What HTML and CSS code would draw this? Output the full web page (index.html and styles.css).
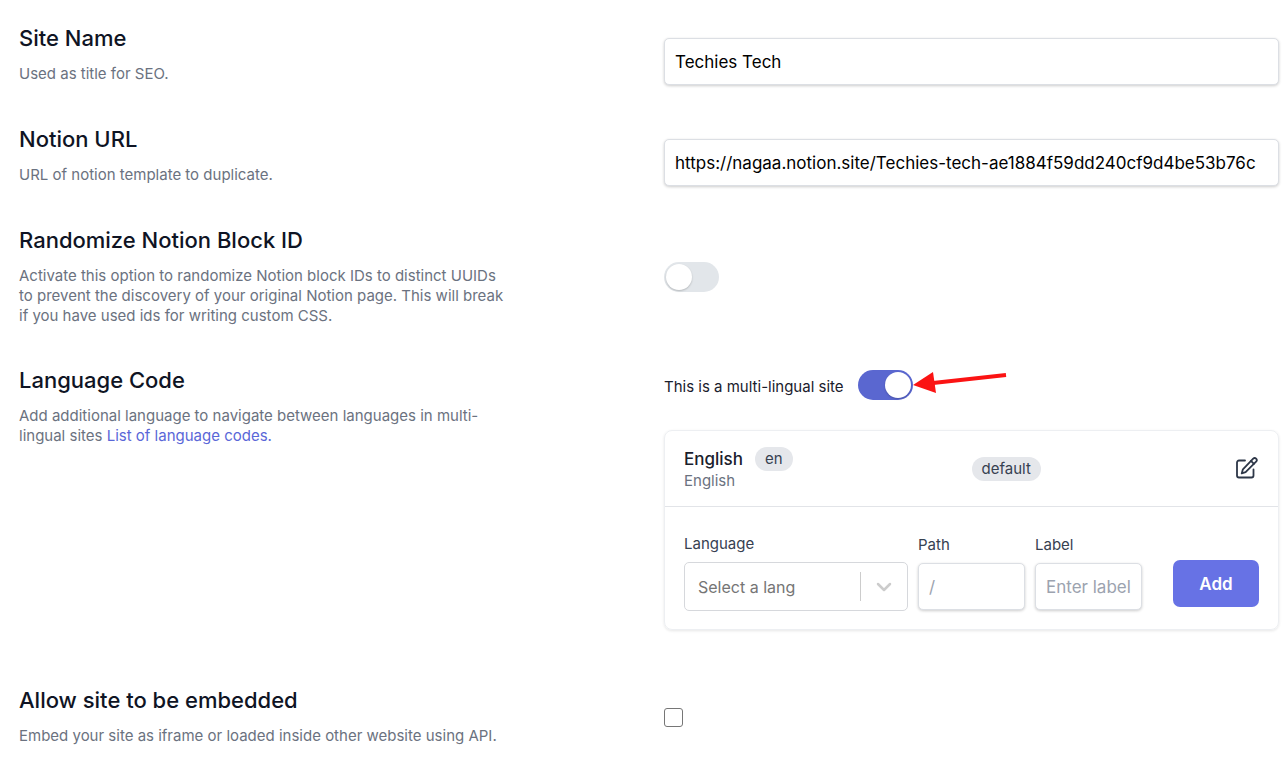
FILE: index.html
```html
<!DOCTYPE html>
<html lang="en">
<head>
    <meta charset="UTF-8">
    <meta name="viewport" content="width=device-width, initial-scale=1.0">
    <title>Site Settings</title>
    <link rel="stylesheet" href="styles.css">
</head>
<body>

    <form class="settings">
        <section class="row">
            <div class="info">
                <h2 class="title"><label for="site-name">Site Name</label></h2>
                <p class="description">Used as title for SEO.</p>
            </div>
            <div class="control control-input">
                <input type="text" id="site-name" class="text-input" value="Techies Tech">
            </div>
        </section>

        <section class="row">
            <div class="info">
                <h2 class="title"><label for="notion-url">Notion URL</label></h2>
                <p class="description">URL of notion template to duplicate.</p>
            </div>
            <div class="control control-input">
                <input type="text" id="notion-url" class="text-input" value="https://nagaa.notion.site/Techies-tech-ae1884f59dd240cf9d4be53b76c">
            </div>
        </section>

        <section class="row">
            <div class="info">
                <h2 class="title"><label for="randomize">Randomize Notion Block ID</label></h2>
                <p class="description">Activate this option to randomize Notion block IDs to distinct UUIDs to prevent the discovery of your original Notion page. This will break if you have used ids for writing custom CSS.</p>
            </div>
            <div class="control control-center">
                <input type="checkbox" id="randomize" class="toggle">
            </div>
        </section>

        <section class="row">
            <div class="info">
                <h2 class="title">Language Code</h2>
                <p class="description">Add additional language to navigate between languages in multi-lingual sites <a href="#" class="link">List of language codes.</a></p>
            </div>
            <div class="control">
                <div class="multi">
                    <label for="multi-lingual" class="multi-label">This is a multi-lingual site</label>
                    <div class="toggle-wrap">
                        <input type="checkbox" id="multi-lingual" class="toggle" checked>
                        <svg class="arrow" width="94" height="26" viewBox="0 0 94 26" aria-hidden="true">
                            <path d="M20 13L93 5" stroke="#fb1313" stroke-width="4" fill="none"/>
                            <path d="M0 15L20 2L23 23Z" fill="#fb1313"/>
                        </svg>
                    </div>
                </div>

                <div class="card">
                    <div class="language">
                        <div>
                            <div class="language-name">English <span class="badge">en</span></div>
                            <div class="language-label">English</div>
                        </div>
                        <div class="language-actions">
                            <span class="badge">default</span>
                            <button type="button" class="edit-btn" aria-label="Edit">
                                <svg width="24" height="24" viewBox="0 0 24 24" fill="none" stroke="currentColor" stroke-width="1.8" stroke-linecap="round" stroke-linejoin="round">
                                    <path d="M10 3.500H4a2 2 0 0 0-2 2v13a2 2 0 0 0 2 2h12.500a2 2 0 0 0 2-2V12.500"/>
                                    <path d="M18.200 1.700a2 2 0 0 1 2.900 2.900L10.600 15.100l-3.900 1.300 1.200-4.100z"/>
                                    <path d="M16 3.900l2.900 2.900"/>
                                </svg>
                            </button>
                        </div>
                    </div>

                    <div class="add-language">
                        <div class="field field-wide">
                            <label for="language">Language</label>
                            <div class="select-wrap">
                                <select id="language" class="select">
                                    <option>Select a lang</option>
                                </select>
                                <svg class="chevron" width="20" height="20" viewBox="0 0 20 20" fill="none" stroke="#cccccc" stroke-width="2.500" stroke-linecap="round" stroke-linejoin="round" aria-hidden="true">
                                    <path d="M4 7l6 6 6-6"/>
                                </svg>
                            </div>
                        </div>
                        <div class="field">
                            <label for="path">Path</label>
                            <input type="text" id="path" class="text-input" placeholder="/">
                        </div>
                        <div class="field">
                            <label for="label">Label</label>
                            <input type="text" id="label" class="text-input" placeholder="Enter label">
                        </div>
                        <button type="button" class="add-btn">Add</button>
                    </div>
                </div>
            </div>
        </section>

        <section class="row">
            <div class="info">
                <h2 class="title"><label for="embed">Allow site to be embedded</label></h2>
                <p class="description">Embed your site as iframe or loaded inside other website using API.</p>
            </div>
            <div class="control control-center">
                <input type="checkbox" id="embed" class="checkbox">
            </div>
        </section>
    </form>

</body>
</html>
```
FILE: styles.css
```css
* {
    box-sizing: border-box;
}

body {
    margin: 0;
    background: #fff;
    color: #1a202c;
    font-family: Inter, "Liberation Sans", sans-serif;
    font-size: 15px;
    line-height: 20px;
}

input, select, button {
    font-family: inherit;
    margin: 0;
}

.settings {
    display: flex;
    flex-direction: column;
    gap: 40px;
    padding: 24px 6px 20px 19px;
}

.row {
    display: grid;
    grid-template-columns: 1fr 1fr;
    gap: 30px;
}

.info {
    max-width: 490px;
}

.title {
    margin: 0 0 12px;
    color: #0f1424;
    font-size: 22px;
    font-weight: 500;
    line-height: 28px;
}

.description {
    margin: 0;
    color: #6b7280;
}

.link {
    color: #5a67d8;
    text-decoration: none;
}

.control-input {
    padding-top: 14px;
}

.control-center {
    display: flex;
    align-items: center;
    padding-top: 2px;
}

.text-input {
    display: block;
    width: 100%;
    height: 47px;
    padding: 0 10px;
    border: 1px solid #dcdfe4;
    border-radius: 5px;
    background: #fff;
    box-shadow: 0 1px 3px rgba(0, 0, 0, 0.2);
    color: #000;
    font-size: 17px;
}

.text-input::placeholder {
    color: #9ca3af;
}

/* Toggle switch */
.toggle {
    display: block;
    appearance: none;
    width: 55px;
    height: 30px;
    padding: 2px;
    border-radius: 15px;
    background: #e2e6ea;
    cursor: pointer;
}

.toggle::before {
    content: "";
    display: block;
    width: 26px;
    height: 26px;
    border-radius: 50%;
    background: #fff;
    box-shadow: 0 1px 2px rgba(0, 0, 0, 0.2);
}

.toggle:checked {
    background: #5a67d0;
}

.toggle:checked::before {
    margin-left: auto;
}

.toggle-wrap {
    position: relative;
}

.arrow {
    position: absolute;
    left: 100%;
    top: 0;
}

.multi {
    display: flex;
    align-items: center;
    gap: 14px;
    padding-top: 4px;
}

.multi-label {
    padding-top: 4px;
}

.card {
    margin: 30px 0 16px;
    border: 1px solid #edeff2;
    border-radius: 8px;
    box-shadow: 0 1px 3px rgba(0, 0, 0, 0.1);
}

.language {
    display: grid;
    grid-template-columns: 1fr 1fr;
    padding: 16px 19px 15px;
    border-bottom: 1px solid #e2e4e8;
}

.language-name {
    display: flex;
    align-items: center;
    gap: 12px;
    font-size: 17px;
    font-weight: 500;
}

.language-label {
    color: #6b7280;
}

.language-actions {
    display: flex;
    align-items: center;
    justify-content: space-between;
}

.badge {
    padding: 2px 10px;
    border-radius: 12px;
    background: #e5e7eb;
    color: #374151;
    font-size: 15px;
    font-weight: 400;
}

.edit-btn {
    display: flex;
    padding: 0;
    border: none;
    background: none;
    color: #2d3748;
    cursor: pointer;
}

.add-language {
    display: grid;
    grid-template-columns: repeat(5, 1fr);
    align-items: center;
    gap: 10px;
    padding: 27px 19px 18px;
}

.field {
    color: #374151;
}

.field label {
    display: block;
    margin-bottom: 8px;
}

.field-wide {
    grid-column: span 2;
}

.select-wrap {
    position: relative;
}

.select {
    display: block;
    appearance: none;
    width: 100%;
    height: 49px;
    padding: 0 60px 0 13px;
    border: 1px solid #d6d8dc;
    border-radius: 5px;
    background: #fff;
    color: #757575;
    font-size: 16px;
}

.select-wrap::after {
    content: "";
    position: absolute;
    top: 10px;
    bottom: 10px;
    right: 47px;
    width: 1px;
    background: #ccc;
}

.chevron {
    position: absolute;
    top: 15px;
    right: 14px;
    pointer-events: none;
}

.add-btn {
    align-self: end;
    justify-self: end;
    width: 86px;
    height: 47px;
    margin-bottom: 4px;
    border: none;
    border-radius: 7px;
    background: #6772e5;
    color: #fff;
    font-size: 17px;
    font-weight: 600;
    cursor: pointer;
}

.checkbox {
    appearance: none;
    width: 19px;
    height: 19px;
    border: 1px solid #767676;
    border-radius: 3px;
    background: #fff;
}

.checkbox:checked {
    background: #5a67d0;
}

@media (max-width: 760px) {
    .row {
        grid-template-columns: 1fr;
        gap: 12px;
    }
}
```
